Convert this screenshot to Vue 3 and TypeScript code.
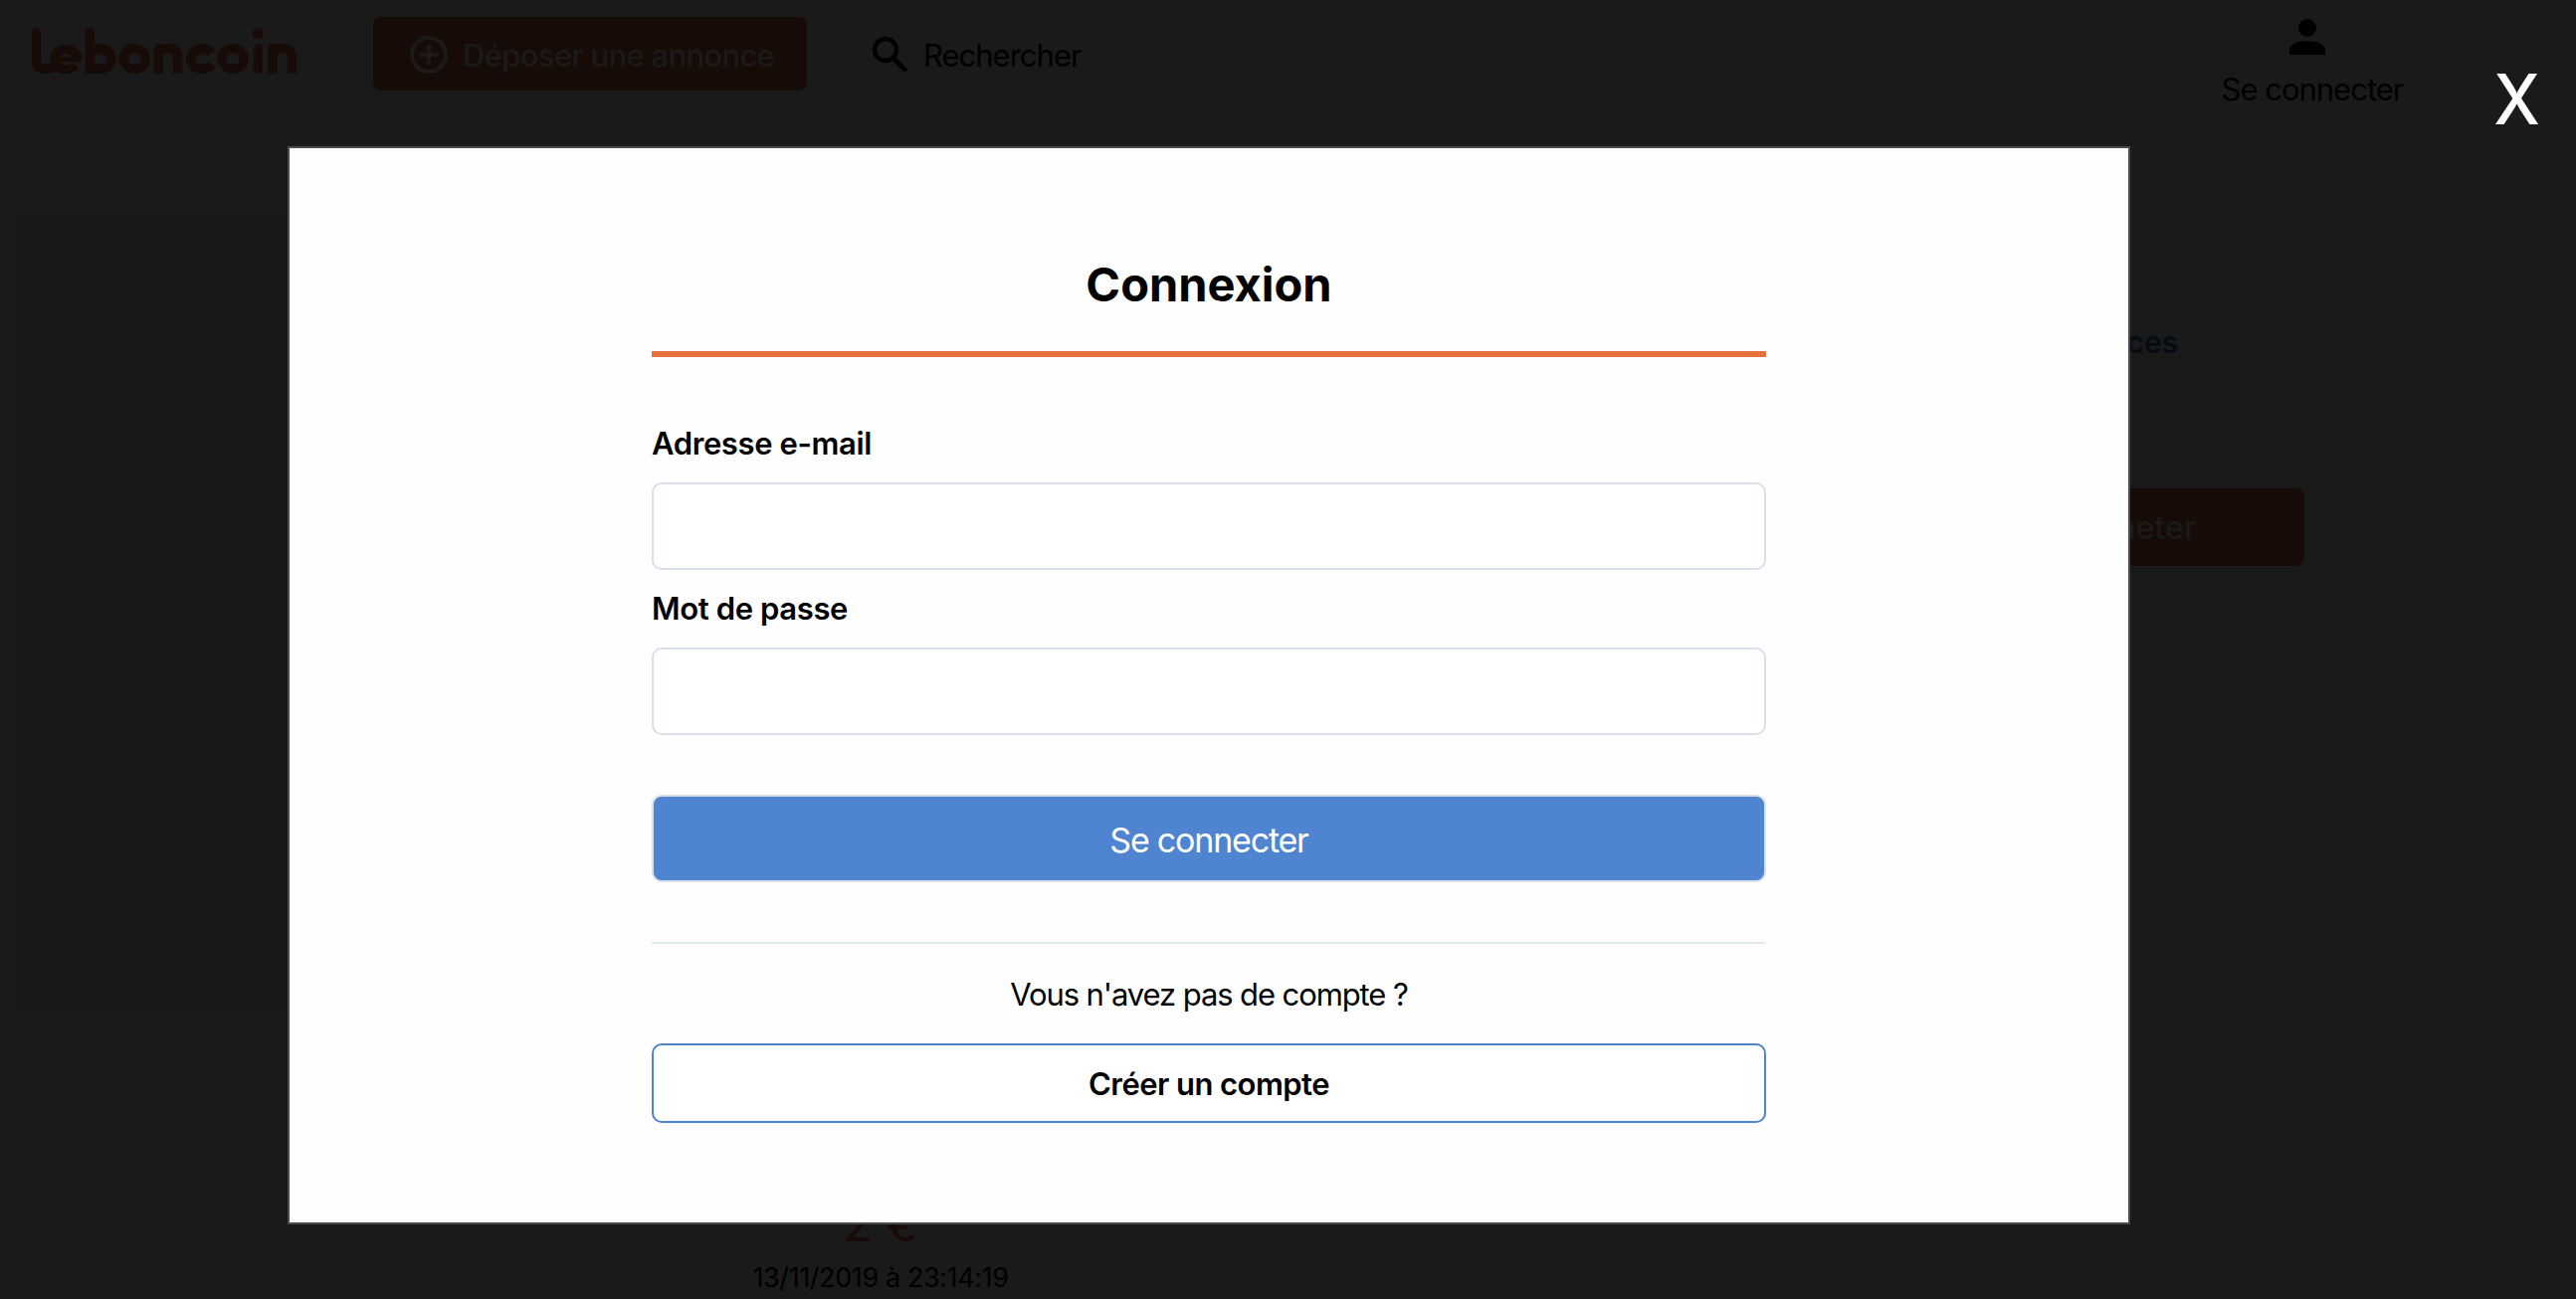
<script setup lang="ts">
import { ref } from 'vue'

const email = ref('')
const password = ref('')
</script>

<template>
  <div class="screen">
    <div class="page">
      <header class="header">
        <svg class="logo" viewBox="0 0 266 46" role="img" aria-label="leboncoin">
          <g fill="none" stroke="currentColor" stroke-width="9.2">
            <path d="M4.6 4.6V33.5Q4.6 41.4 13 41.4Q19 41.4 24 36.5" stroke-linecap="round" />
            <path d="M43.4 37.4A11.3 10.4 0 1 1 45.4 32" />
            <path d="M24 31.6H50" stroke-width="4.6" />
            <path d="M58.3 4.6V46" />
            <ellipse cx="69" cy="31" rx="11.2" ry="10.4" />
            <ellipse cx="103.3" cy="31" rx="11.2" ry="10.4" />
            <path d="M127.3 46V20.5M127.3 29C127.3 23.5 130.5 20.6 136.5 20.6C143.5 20.6 146.6 24 146.6 29.5V46" />
            <path d="M180.4 25.2A11.3 10.4 0 1 0 180.4 36.8" />
            <ellipse cx="202.3" cy="31" rx="11.2" ry="10.4" />
            <path d="M227.2 20.6V41.4" stroke-linecap="round" />
            <path d="M241.8 46V20.5M241.8 29C241.8 23.5 245 20.6 251.5 20.6C258.5 20.6 261.4 24 261.4 29.5V46" />
          </g>
          <g fill="currentColor">
            <circle cx="58.3" cy="4.6" r="4.6" />
            <circle cx="127.3" cy="20.6" r="4.6" />
            <circle cx="241.8" cy="20.6" r="4.6" />
            <circle cx="227.2" cy="5.6" r="5.6" />
          </g>
        </svg>
        <button class="post" type="button">
          <svg viewBox="0 0 38 38" class="plus" fill="none" stroke="currentColor" stroke-width="4">
            <circle cx="19" cy="19" r="17" />
            <path d="M19 9V29M9 19H29" />
          </svg>
          <span>Déposer une annonce</span>
        </button>
        <a class="search">
          <svg viewBox="0 0 36 36" class="lens" fill="none" stroke="currentColor">
            <circle cx="13" cy="13" r="11" stroke-width="4.4" />
            <path d="M22 22.5L33.8 34.3" stroke-width="4.6" />
          </svg>
          <span>Rechercher</span>
        </a>
        <a class="account">
          <svg viewBox="0 0 36 36" class="person" fill="currentColor">
            <circle cx="18" cy="9" r="9" />
            <path d="M0 36V31.5C0 25.5 9 22.3 18 22.3S36 25.5 36 31.5V36Z" />
          </svg>
          <span>Se connecter</span>
        </a>
      </header>
      <main class="listing">
        <section class="ad">
          <div class="photo"></div>
          <div class="summary">
            <p class="price">2 €</p>
            <p class="date">13/11/2019 à 23:14:19</p>
          </div>
        </section>
        <aside class="seller">
          <div class="seller-info"><span class="count">annonces</span></div>
          <div class="seller-action"><button class="buy" type="button">Acheter</button></div>
        </aside>
      </main>
    </div>

    <div class="overlay">
      <span class="close">X</span>
      <form class="modal" @submit.prevent>
        <h1>Connexion</h1>
        <label for="email">Adresse e-mail</label>
        <input id="email" v-model="email" type="email" />
        <label for="password">Mot de passe</label>
        <input id="password" v-model="password" type="password" />
        <button class="submit" type="submit">Se connecter</button>
        <hr />
        <p class="question">Vous n'avez pas de compte ?</p>
        <button class="create" type="button">Créer un compte</button>
      </form>
    </div>
  </div>
</template>

<style>
body {
  margin: 0;
  background: #1a1a1a;
}
</style>

<style scoped>
* {
  box-sizing: border-box;
}
.screen {
  position: relative;
  width: 2589px;
  height: 1306px;
  overflow: hidden;
  background: #1a1a1a;
  color: #000;
  font-family: Inter, "Liberation Sans", sans-serif;
  font-size: 31px;
  white-space: nowrap;
}
button {
  font: inherit;
  cursor: pointer;
}
p,
h1 {
  margin: 0;
}
.page {
  height: 1306px;
}
.header {
  display: flex;
  align-items: flex-start;
  height: 124px;
  padding-left: 32px;
  border-bottom: 5px solid #191919;
}
.logo {
  width: 266px;
  height: 46px;
  margin-top: 28px;
  color: #180b07;
}
.post {
  display: flex;
  align-items: center;
  width: 436px;
  height: 74px;
  margin: 17px 0 0 77px;
  padding: 2px 0 0 37px;
  border: 0;
  border-radius: 8px;
  background: #170b07;
  color: #1a1a1a;
  font-weight: 500;
  letter-spacing: -0.65px;
}
.plus {
  width: 38px;
  height: 38px;
  margin-right: 15px;
}
.search {
  display: flex;
  align-items: center;
  height: 74px;
  margin: 18px 0 0 66px;
  letter-spacing: -1px;
}
.lens {
  width: 36px;
  height: 36px;
  margin-right: 15px;
}
.account {
  display: flex;
  flex-direction: column;
  align-items: center;
  width: 184px;
  margin: 19px 173px 0 auto;
  letter-spacing: -1px;
  line-height: 38px;
}
.person {
  width: 36px;
  height: 36px;
  margin: 0 10px 16px 0;
}
.listing {
  display: flex;
  justify-content: space-between;
  padding: 94px 174px 0 14px;
}
.ad {
  width: 1740px;
}
.photo {
  height: 801px;
  background: #181818;
}
.summary {
  width: 500px;
  margin: 189px 0 0 621px;
  text-align: center;
}
.price {
  color: #180b07;
  font-size: 48px;
  line-height: 46px;
}
.date {
  margin-top: 13px;
  font-size: 27px;
  line-height: 36px;
  letter-spacing: -0.4px;
}
.seller {
  width: 620px;
  height: 400px;
}
.seller-info {
  height: 210px;
  padding: 107px 226px 0 0;
  border-bottom: 1px solid #181818;
  text-align: right;
}
.count {
  color: #050b15;
  font-weight: 600;
  letter-spacing: -0.5px;
}
.seller-action {
  height: 175px;
  padding: 63px 99px 0 0;
  border-bottom: 1px solid #181818;
  text-align: right;
}
.buy {
  width: 338px;
  height: 78px;
  padding: 0;
  border: 0;
  border-radius: 8px;
  background: #170b07;
  color: #1a1a1a;
  font-size: 32px;
  font-weight: 500;
}
.overlay {
  position: absolute;
  inset: 0;
  padding: 147px 0 0 289px;
}
.close {
  position: absolute;
  right: 35px;
  top: 58px;
  color: #fff;
  font-size: 70px;
  font-weight: 500;
  line-height: 84px;
  transform: scaleX(0.95);
}
.modal {
  display: flex;
  flex-direction: column;
  width: 1852px;
  height: 1084px;
  padding: 108px 364px 0;
  border: 2px solid #4a4a4a;
  background: #fefefe;
}
h1 {
  height: 102px;
  border-bottom: 6px solid #e5723a;
  font-size: 47px;
  font-weight: 700;
  line-height: 57px;
  text-align: center;
}
label {
  height: 38px;
  margin-top: 68px;
  font-weight: 600;
  line-height: 38px;
  letter-spacing: -0.38px;
}
input {
  height: 88px;
  margin: 20px 0 0;
  padding: 0 20px;
  border: 2px solid #dadfeb;
  border-radius: 10px;
  background: #fff;
  font: inherit;
}
input + label {
  margin-top: 20px;
}
.submit {
  height: 88px;
  margin-top: 60px;
  padding: 2px 0 0;
  border: 2px solid #d9dfe9;
  border-radius: 10px;
  background: #4f84d1;
  color: #fff;
  font-size: 34px;
  letter-spacing: -1.2px;
}
hr {
  width: 100%;
  height: 2px;
  margin: 60px 0 0;
  border: 0;
  background: #e4e9ed;
}
.question {
  margin-top: 32px;
  line-height: 38px;
  letter-spacing: -1.1px;
  text-align: center;
}
.create {
  height: 80px;
  margin-top: 30px;
  border: 2px solid #4f83cf;
  border-radius: 10px;
  background: #fff;
  color: #000;
  font-weight: 600;
  letter-spacing: -0.55px;
}
</style>
